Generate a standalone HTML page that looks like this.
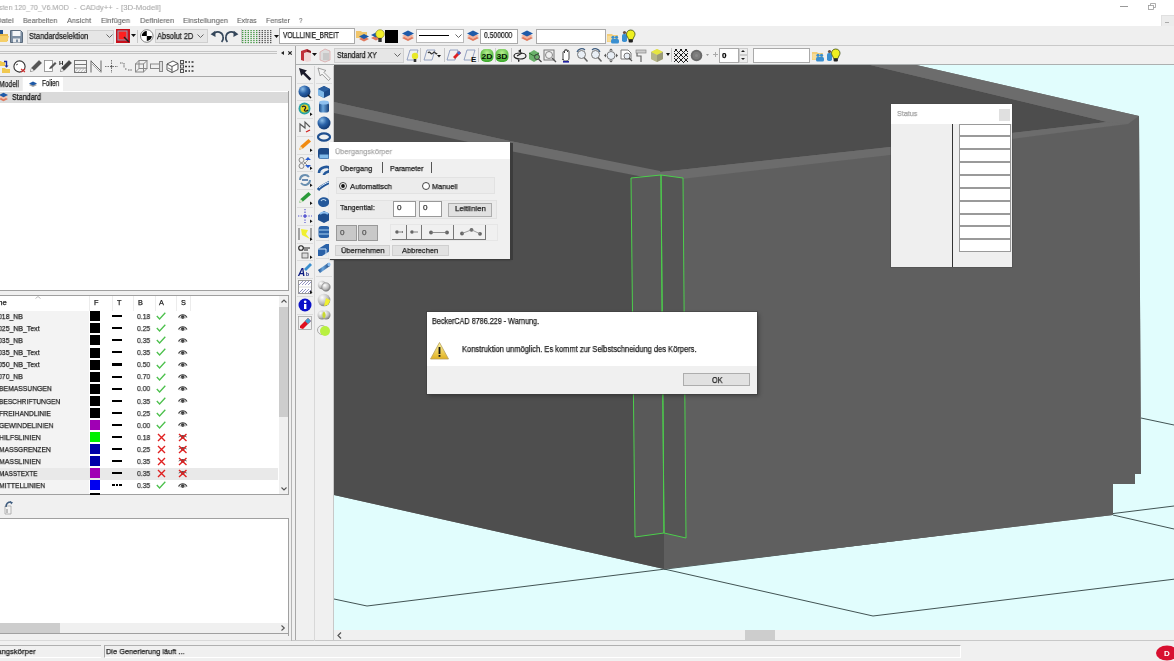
<!DOCTYPE html>
<html><head><meta charset="utf-8">
<style>
*{margin:0;padding:0;box-sizing:border-box}
html,body{width:1174px;height:661px;overflow:hidden;background:#f0f0f0;font-family:"Liberation Sans",sans-serif;font-size:8px;color:#000;position:relative}
.a{position:absolute}
svg.a{overflow:visible}
.t{position:absolute;white-space:nowrap;line-height:1;transform-origin:0 0;will-change:transform;-webkit-text-stroke:0.25px currentColor}
</style></head><body>
<div class="a" style="left:0px;top:0px;width:1174px;height:26px;background:#fff"></div>
<div class="t" id="t0" style="left:-1px;top:3.80px;font-size:7.8px;color:#aaa;font-weight:normal;-webkit-text-stroke:0.1px #aaa;transform:scaleX(0.9047);">sten 120_70_V6.MOD</div>
<div class="t" id="t1" style="left:73.5px;top:3.80px;font-size:7.8px;color:#aaa;font-weight:normal;-webkit-text-stroke:0.1px #aaa;">-</div>
<div class="t" id="t2" style="left:80.4px;top:3.80px;font-size:7.8px;color:#aaa;font-weight:normal;-webkit-text-stroke:0.1px #aaa;transform:scaleX(0.9641);">CADdy++</div>
<div class="t" id="t3" style="left:115.5px;top:3.80px;font-size:7.8px;color:#aaa;font-weight:normal;-webkit-text-stroke:0.1px #aaa;">-</div>
<div class="t" id="t4" style="left:121px;top:3.80px;font-size:7.8px;color:#aaa;font-weight:normal;-webkit-text-stroke:0.1px #aaa;transform:scaleX(0.9956);">[3D-Modell]</div>
<div class="a" style="left:1120px;top:6px;width:8px;height:0.8px;background:#999"></div>
<svg class="a" style="left:1148px;top:3px" width="8" height="7" viewBox="0 0 8 7"><rect x="0.5" y="2.5" width="5" height="4" fill="none" stroke="#999" stroke-width="0.8"/><path d="M2.5 2.5V0.5H7.5V4.5H5.5" fill="none" stroke="#999" stroke-width="0.8"/></svg>
<div class="t" id="t5" style="left:-4.5px;top:16.73px;font-size:8.0px;color:#666;font-weight:normal;-webkit-text-stroke:0.1px #666;transform:scaleX(0.9472);">Datei</div>
<div class="t" id="t6" style="left:22.9px;top:16.73px;font-size:8.0px;color:#666;font-weight:normal;-webkit-text-stroke:0.1px #666;transform:scaleX(0.8862);">Bearbeiten</div>
<div class="t" id="t7" style="left:67.3px;top:16.73px;font-size:8.0px;color:#666;font-weight:normal;-webkit-text-stroke:0.1px #666;transform:scaleX(0.9225);">Ansicht</div>
<div class="t" id="t8" style="left:101.4px;top:16.73px;font-size:8.0px;color:#666;font-weight:normal;-webkit-text-stroke:0.1px #666;transform:scaleX(0.9147);">Einfügen</div>
<div class="t" id="t9" style="left:139.7px;top:16.73px;font-size:8.0px;color:#666;font-weight:normal;-webkit-text-stroke:0.1px #666;transform:scaleX(0.9378);">Definieren</div>
<div class="t" id="t10" style="left:182.9px;top:16.73px;font-size:8.0px;color:#666;font-weight:normal;-webkit-text-stroke:0.1px #666;transform:scaleX(0.9387);">Einstellungen</div>
<div class="t" id="t11" style="left:236.9px;top:16.73px;font-size:8.0px;color:#666;font-weight:normal;-webkit-text-stroke:0.1px #666;transform:scaleX(0.8645);">Extras</div>
<div class="t" id="t12" style="left:265.8px;top:16.73px;font-size:8.0px;color:#666;font-weight:normal;-webkit-text-stroke:0.1px #666;transform:scaleX(0.8811);">Fenster</div>
<div class="t" id="t13" style="left:299px;top:16.73px;font-size:8.0px;color:#666;font-weight:normal;-webkit-text-stroke:0.1px #666;transform:scaleX(0.7860);">?</div>
<div class="a" style="left:1160.5px;top:15px;width:14px;height:11.5px;background:#ececec;border:1px solid #e0e0e0"></div>
<div class="a" style="left:1165px;top:22px;width:4px;height:1px;background:#aaa"></div>
<div class="a" style="left:0px;top:26px;width:1174px;height:19px;background:#efefef"></div>
<div class="a" style="left:0px;top:45px;width:1174px;height:1px;background:#c9c9c9"></div>
<svg class="a" style="left:-4px;top:29px" width="14" height="14" viewBox="0 0 14 14"><path d="M0 4h5l1 1h6v7H0z" fill="#e8b84a"/><path d="M1 7h12l-2 6H0z" fill="#f5cf6a"/><rect x="2" y="1" width="5" height="4" fill="#1f4f8f"/></svg>
<svg class="a" style="left:10px;top:30px" width="13" height="13" viewBox="0 0 13 13"><path d="M0.5 0.5h10l2 2v10h-12z" fill="#7d8fa3" stroke="#5b6b7d"/><rect x="2.5" y="1" width="8" height="5" fill="#f4f6f8"/><rect x="3" y="8.5" width="7" height="4" fill="#e9ecef"/><rect x="6" y="9.5" width="2" height="2.5" fill="#7d8fa3"/></svg>
<div class="a" style="left:27px;top:29.5px;width:87px;height:14px;background:#e6e6e6;border:1px solid #cfcfcf"></div>
<div class="t" id="t14" style="left:29.1px;top:31.77px;font-size:8.3px;color:#1a1a1a;font-weight:normal;transform:scaleX(0.8928);">Standardselektion</div>
<svg class="a" style="left:106px;top:34px" width="7" height="5" viewBox="0 0 7 5"><path d="M0.5 0.5L3.5 3.5L6.5 0.5" fill="none" stroke="#666"/></svg>
<svg class="a" style="left:116px;top:29px" width="14" height="14" viewBox="0 0 14 14"><rect width="14" height="14" fill="#c8101b"/><rect x="2" y="2" width="9" height="9" fill="#ff2020" stroke="#8aa0b8" stroke-width="1"/><path d="M8 8l5 5" stroke="#222" stroke-width="1.5"/></svg>
<svg class="a" style="left:131px;top:34px" width="5" height="3" viewBox="0 0 5 3"><path d="M0 0h5L2.5 3z" fill="#111"/></svg>
<div class="a" style="left:137px;top:30px;width:1px;height:13px;background:#c8c8c8"></div>
<svg class="a" style="left:140px;top:29px" width="14" height="14" viewBox="0 0 14 14"><circle cx="6.8" cy="7" r="6.3" fill="#fff" stroke="#777" stroke-width="0.9"/><path d="M6.8 2A5 5 0 0 0 1.8 7H6.8z M6.8 12A5 5 0 0 0 11.8 7H6.8z" fill="#000"/></svg>
<div class="a" style="left:154.5px;top:28.8px;width:53px;height:14.4px;background:#e6e6e6;border:1px solid #cfcfcf"></div>
<div class="t" id="t15" style="left:157px;top:31.77px;font-size:8.3px;color:#1a1a1a;font-weight:normal;transform:scaleX(0.8942);">Absolut 2D</div>
<svg class="a" style="left:197px;top:34px" width="7" height="5" viewBox="0 0 7 5"><path d="M0.5 0.5L3.5 3.5L6.5 0.5" fill="none" stroke="#666"/></svg>
<svg class="a" style="left:209.5px;top:29.5px" width="14" height="13" viewBox="0 0 14 13"><path d="M4.5 3.2C7 1 12 1.5 13 6.2C13.7 9 12.5 11 11.6 12" fill="none" stroke="#34465a" stroke-width="1.6"/><path d="M0.6 4.2L5.2 0.8L5.6 7z" fill="#34465a"/></svg>
<svg class="a" style="left:224.5px;top:29.5px" width="14" height="13" viewBox="0 0 14 13"><path d="M9.5 3.2C7 1 2 1.5 1 6.2C0.3 9 1.5 11 2.4 12" fill="none" stroke="#34465a" stroke-width="1.6"/><path d="M13.4 4.2L8.8 0.8L8.4 7z" fill="#34465a"/></svg>
<svg class="a" style="left:242px;top:29.5px" width="31" height="14" viewBox="0 0 31 14"><rect x="0.0" y="0" width="1.4" height="1.2" fill="#4a9a4a"/><rect x="2.8" y="0" width="1.4" height="1.2" fill="#4a9a4a"/><rect x="5.6" y="0" width="1.4" height="1.2" fill="#4a9a4a"/><rect x="8.4" y="0" width="1.4" height="1.2" fill="#4a9a4a"/><rect x="11.2" y="0" width="1.4" height="1.2" fill="#4a9a4a"/><rect x="14.0" y="0" width="1.4" height="1.2" fill="#4a9a4a"/><rect x="16.8" y="0" width="1.4" height="1.2" fill="#555"/><rect x="19.6" y="0" width="1.4" height="1.2" fill="#555"/><rect x="22.4" y="0" width="1.4" height="1.2" fill="#555"/><rect x="25.2" y="0" width="1.4" height="1.2" fill="#555"/><rect x="28.0" y="0" width="1.4" height="1.2" fill="#555"/><rect x="0.0" y="2" width="1.4" height="1.2" fill="#4a9a4a"/><rect x="2.8" y="2" width="1.4" height="1.2" fill="#4a9a4a"/><rect x="5.6" y="2" width="1.4" height="1.2" fill="#4a9a4a"/><rect x="8.4" y="2" width="1.4" height="1.2" fill="#4a9a4a"/><rect x="11.2" y="2" width="1.4" height="1.2" fill="#4a9a4a"/><rect x="14.0" y="2" width="1.4" height="1.2" fill="#4a9a4a"/><rect x="16.8" y="2" width="1.4" height="1.2" fill="#555"/><rect x="19.6" y="2" width="1.4" height="1.2" fill="#555"/><rect x="22.4" y="2" width="1.4" height="1.2" fill="#555"/><rect x="25.2" y="2" width="1.4" height="1.2" fill="#555"/><rect x="28.0" y="2" width="1.4" height="1.2" fill="#555"/><rect x="0.0" y="4" width="1.4" height="1.2" fill="#4a9a4a"/><rect x="2.8" y="4" width="1.4" height="1.2" fill="#4a9a4a"/><rect x="5.6" y="4" width="1.4" height="1.2" fill="#4a9a4a"/><rect x="8.4" y="4" width="1.4" height="1.2" fill="#4a9a4a"/><rect x="11.2" y="4" width="1.4" height="1.2" fill="#4a9a4a"/><rect x="14.0" y="4" width="1.4" height="1.2" fill="#4a9a4a"/><rect x="16.8" y="4" width="1.4" height="1.2" fill="#555"/><rect x="19.6" y="4" width="1.4" height="1.2" fill="#555"/><rect x="22.4" y="4" width="1.4" height="1.2" fill="#555"/><rect x="25.2" y="4" width="1.4" height="1.2" fill="#555"/><rect x="28.0" y="4" width="1.4" height="1.2" fill="#555"/><rect x="0.0" y="6" width="1.4" height="1.2" fill="#4a9a4a"/><rect x="2.8" y="6" width="1.4" height="1.2" fill="#4a9a4a"/><rect x="5.6" y="6" width="1.4" height="1.2" fill="#4a9a4a"/><rect x="8.4" y="6" width="1.4" height="1.2" fill="#4a9a4a"/><rect x="11.2" y="6" width="1.4" height="1.2" fill="#4a9a4a"/><rect x="14.0" y="6" width="1.4" height="1.2" fill="#4a9a4a"/><rect x="16.8" y="6" width="1.4" height="1.2" fill="#555"/><rect x="19.6" y="6" width="1.4" height="1.2" fill="#555"/><rect x="22.4" y="6" width="1.4" height="1.2" fill="#555"/><rect x="25.2" y="6" width="1.4" height="1.2" fill="#555"/><rect x="28.0" y="6" width="1.4" height="1.2" fill="#555"/><rect x="0.0" y="8" width="1.4" height="1.2" fill="#4a9a4a"/><rect x="2.8" y="8" width="1.4" height="1.2" fill="#4a9a4a"/><rect x="5.6" y="8" width="1.4" height="1.2" fill="#4a9a4a"/><rect x="8.4" y="8" width="1.4" height="1.2" fill="#4a9a4a"/><rect x="11.2" y="8" width="1.4" height="1.2" fill="#4a9a4a"/><rect x="14.0" y="8" width="1.4" height="1.2" fill="#4a9a4a"/><rect x="16.8" y="8" width="1.4" height="1.2" fill="#555"/><rect x="19.6" y="8" width="1.4" height="1.2" fill="#555"/><rect x="22.4" y="8" width="1.4" height="1.2" fill="#555"/><rect x="25.2" y="8" width="1.4" height="1.2" fill="#555"/><rect x="28.0" y="8" width="1.4" height="1.2" fill="#555"/><rect x="0.0" y="10" width="1.4" height="1.2" fill="#4a9a4a"/><rect x="2.8" y="10" width="1.4" height="1.2" fill="#4a9a4a"/><rect x="5.6" y="10" width="1.4" height="1.2" fill="#4a9a4a"/><rect x="8.4" y="10" width="1.4" height="1.2" fill="#4a9a4a"/><rect x="11.2" y="10" width="1.4" height="1.2" fill="#4a9a4a"/><rect x="14.0" y="10" width="1.4" height="1.2" fill="#4a9a4a"/><rect x="16.8" y="10" width="1.4" height="1.2" fill="#555"/><rect x="19.6" y="10" width="1.4" height="1.2" fill="#555"/><rect x="22.4" y="10" width="1.4" height="1.2" fill="#555"/><rect x="25.2" y="10" width="1.4" height="1.2" fill="#555"/><rect x="28.0" y="10" width="1.4" height="1.2" fill="#555"/><rect x="0.0" y="12" width="1.4" height="1.2" fill="#4a9a4a"/><rect x="2.8" y="12" width="1.4" height="1.2" fill="#4a9a4a"/><rect x="5.6" y="12" width="1.4" height="1.2" fill="#4a9a4a"/><rect x="8.4" y="12" width="1.4" height="1.2" fill="#4a9a4a"/><rect x="11.2" y="12" width="1.4" height="1.2" fill="#4a9a4a"/><rect x="14.0" y="12" width="1.4" height="1.2" fill="#4a9a4a"/><rect x="16.8" y="12" width="1.4" height="1.2" fill="#555"/><rect x="19.6" y="12" width="1.4" height="1.2" fill="#555"/><rect x="22.4" y="12" width="1.4" height="1.2" fill="#555"/><rect x="25.2" y="12" width="1.4" height="1.2" fill="#555"/><rect x="28.0" y="12" width="1.4" height="1.2" fill="#555"/></svg>
<div class="a" style="left:240.5px;top:29px;width:1px;height:14px;background:#c8c8c8"></div>
<svg class="a" style="left:273.5px;top:35px" width="5" height="3" viewBox="0 0 5 3"><path d="M0 0h5L2.5 3z" fill="#111"/></svg>
<div class="a" style="left:279px;top:28px;width:76px;height:16px;background:#fff;border:1px solid #aaa"></div>
<div class="t" id="t16" style="left:283.1px;top:30.57px;font-size:8.3px;color:#1a1a1a;font-weight:normal;transform:scaleX(0.7872);">VOLLLINIE_BREIT</div>
<svg class="a" style="left:355.5px;top:29px" width="14" height="14" viewBox="0 0 14 14"><path d="M0 2h5l1 1h5v6H0z" fill="#f1c56a"/><path d="M3 10l5 2.5 5-2.5-5-2.5z" fill="#e07a5f"/><path d="M3 7.5l5 2.5 5-2.5-5-2.5z" fill="#1e5aa8"/></svg>
<svg class="a" style="left:370.5px;top:29px" width="14" height="14" viewBox="0 0 14 14"><path d="M0 9l5 2.5 5-2.5-5-2.5z" fill="#e07a5f"/><path d="M0 6l5 2.5 5-2.5-5-2.5z" fill="#1e5aa8"/><circle cx="9" cy="5" r="4.3" fill="#f2f02a" stroke="#7a7a20" stroke-width="0.6"/><rect x="7.3" y="9" width="3.4" height="4" fill="#333"/></svg>
<div class="a" style="left:385px;top:29.5px;width:13px;height:13px;background:#000"></div>
<svg class="a" style="left:401px;top:29px" width="14" height="14" viewBox="0 0 14 14"><path d="M1 9l6 3 6-3-6-3z" fill="#e07a5f"/><path d="M1 7l6 3 6-3-6-3z" fill="#f3b39d"/><path d="M1 4.5l6 3 6-3-6-3z" fill="#1e5aa8"/></svg>
<div class="a" style="left:415.5px;top:29px;width:48.5px;height:14px;background:#fff;border:1px solid #bbb"></div>
<div class="a" style="left:419px;top:35px;width:30px;height:1.4px;background:#000"></div>
<svg class="a" style="left:455px;top:34px" width="7" height="5" viewBox="0 0 7 5"><path d="M0.5 0.5L3.5 3.5L6.5 0.5" fill="none" stroke="#666"/></svg>
<svg class="a" style="left:466px;top:29px" width="14" height="14" viewBox="0 0 14 14"><path d="M1 9l6 3 6-3-6-3z" fill="#e07a5f"/><path d="M1 7l6 3 6-3-6-3z" fill="#f3b39d"/><path d="M1 4.5l6 3 6-3-6-3z" fill="#1e5aa8"/></svg>
<div class="a" style="left:479.5px;top:28.5px;width:38px;height:15.5px;background:#fff;border:1px solid #aaa"></div>
<div class="t" id="t17" style="left:483.5px;top:30.77px;font-size:8.3px;color:#1a1a1a;font-weight:normal;transform:scaleX(0.8148);">0.500000</div>
<svg class="a" style="left:519.5px;top:29px" width="14" height="14" viewBox="0 0 14 14"><path d="M1 9l6 3 6-3-6-3z" fill="#e07a5f"/><path d="M1 7l6 3 6-3-6-3z" fill="#f3b39d"/><path d="M1 4.5l6 3 6-3-6-3z" fill="#1e5aa8"/></svg>
<div class="a" style="left:536px;top:28.5px;width:69.5px;height:15.5px;background:#fff;border:1px solid #aaa"></div>
<svg class="a" style="left:606.5px;top:29.5px" width="14" height="14" viewBox="0 0 14 14"><path d="M0 4h5l1 1h5v7H0z" fill="#f3cd78"/><path d="M0.5 6h10v5.5h-10z" fill="#f7dc98"/><circle cx="6" cy="7.3" r="1.6" fill="#3a8fd0"/><circle cx="9.5" cy="7.3" r="1.6" fill="#3a8fd0"/><rect x="4" y="9" width="8" height="4.5" rx="1.5" fill="#3a8fd0"/></svg>
<svg class="a" style="left:621px;top:29px" width="15" height="14" viewBox="0 0 15 14"><circle cx="3.5" cy="3.5" r="1.6" fill="#6a5040"/><rect x="1" y="5" width="5" height="8" rx="1.8" fill="#3a8fd0"/><path d="M9.7 1C12.5 1 14 3.2 14 5.2C14 7.2 12.2 8.5 12 10.5H7.5C7.3 8.5 5.5 7.2 5.5 5.2C5.5 3.2 7 1 9.7 1z" fill="#eef020" stroke="#3a4a10" stroke-width="0.8"/><rect x="7.6" y="10.5" width="4.3" height="3" rx="1" fill="#222"/></svg>
<div class="a" style="left:296px;top:45.5px;width:878px;height:19px;background:#f0f0f0"></div>
<div class="a" style="left:295px;top:45.5px;width:1px;height:595px;background:#a8a8a8"></div>
<svg class="a" style="left:300px;top:47.5px" width="12" height="14" viewBox="0 0 12 14"><path d="M2 3l5-2 4 2v10l-4 1-5-2z" fill="#f0d8d8"/><path d="M1 3l6-2v3l-3 1v8l-3-1z" fill="#c0303a"/><path d="M7 1l4 2v2l-4-1z" fill="#8a1a20"/></svg>
<svg class="a" style="left:312px;top:52.5px" width="5" height="3" viewBox="0 0 5 3"><path d="M0 0h5L2.5 3z" fill="#111"/></svg>
<svg class="a" style="left:319px;top:47.5px" width="12" height="14" viewBox="0 0 12 14"><path d="M1 4l5-3 5 2v9l-5 2-5-2z" fill="#ddd" stroke="#d9a0a0" stroke-width="0.7"/><path d="M4 5h6v7H4z" fill="#c8c8c8"/></svg>
<div class="a" style="left:334px;top:48px;width:69.5px;height:14.5px;background:#e6e6e6;border:1px solid #cfcfcf"></div>
<div class="t" id="t18" style="left:336.9px;top:50.87px;font-size:8.3px;color:#1a1a1a;font-weight:normal;transform:scaleX(0.8481);">Standard XY</div>
<svg class="a" style="left:394px;top:52.5px" width="7" height="5" viewBox="0 0 7 5"><path d="M0.5 0.5L3.5 3.5L6.5 0.5" fill="none" stroke="#666"/></svg>
<svg class="a" style="left:406px;top:47.5px" width="13" height="15" viewBox="0 0 13 15"><path d="M1 12L4 2H12L9 12z" fill="none" stroke="#7d8fb8" stroke-width="0.8"/><circle cx="9" cy="8" r="3.2" fill="#e8e82a"/><rect x="7.7" y="11" width="2.6" height="3" fill="#333"/></svg>
<div class="a" style="left:420.4px;top:48px;width:1px;height:14px;background:#c8c8c8"></div>
<svg class="a" style="left:422.5px;top:47.5px" width="19" height="15" viewBox="0 0 19 15"><path d="M1 12L4 2H12L9 12z" fill="none" stroke="#7d8fb8" stroke-width="0.8"/><path d="M5 5c2-3 3 3 5 0s3 3 4 0" fill="none" stroke="#333" stroke-width="1.2"/><path d="M14 7h4l-2 2.5z" fill="#111"/></svg>
<div class="a" style="left:444px;top:48px;width:1px;height:14px;background:#c8c8c8"></div>
<svg class="a" style="left:446px;top:47.5px" width="15" height="15" viewBox="0 0 15 15"><path d="M1 12L4 2H12L9 12z" fill="none" stroke="#7d8fb8" stroke-width="0.8"/><path d="M7 9l6-6 2 2-6 6z" fill="#e02020"/><path d="M11 5l2-2 2 2-2 2z" fill="#3a6fd0"/></svg>
<svg class="a" style="left:462.7px;top:47.5px" width="14" height="15" viewBox="0 0 14 15"><path d="M1 12L4 2H12L9 12z" fill="none" stroke="#7d8fb8" stroke-width="0.8"/><text x="8" y="14" font-size="8" font-weight="bold" font-family="Liberation Sans" fill="#111">E</text></svg>
<div class="a" style="left:478px;top:48px;width:1px;height:14px;background:#c8c8c8"></div>
<div class="a" style="left:494.6px;top:48px;width:1px;height:14px;background:#d0d0d0"></div>
<svg class="a" style="left:480.4px;top:47.5px" width="14" height="15" viewBox="0 0 14 15"><defs><radialGradient id="gg2D" cx="0.5" cy="0.3" r="0.7"><stop offset="0" stop-color="#b8f090"/><stop offset="1" stop-color="#3aa82a"/></radialGradient></defs><rect x="0.5" y="1" width="13" height="13" rx="5" fill="url(#gg2D)"/><text x="7" y="11" text-anchor="middle" font-size="7.6" font-weight="bold" font-family="Liberation Sans" fill="#031503" textLength="11" lengthAdjust="spacingAndGlyphs">2D</text></svg>
<svg class="a" style="left:495.4px;top:47.5px" width="14" height="15" viewBox="0 0 14 15"><defs><radialGradient id="gg3D" cx="0.5" cy="0.3" r="0.7"><stop offset="0" stop-color="#b8f090"/><stop offset="1" stop-color="#3aa82a"/></radialGradient></defs><rect x="0.5" y="1" width="13" height="13" rx="5" fill="url(#gg3D)"/><text x="7" y="11" text-anchor="middle" font-size="7.6" font-weight="bold" font-family="Liberation Sans" fill="#031503" textLength="11" lengthAdjust="spacingAndGlyphs">3D</text></svg>
<div class="a" style="left:511px;top:48px;width:1px;height:14px;background:#c8c8c8"></div>
<svg class="a" style="left:513px;top:47.5px" width="14" height="15" viewBox="0 0 14 15"><ellipse cx="7" cy="8" rx="6" ry="3" fill="none" stroke="#222" stroke-width="1.2"/><path d="M5 3l3-2v4z M7 13l-2 1v-3z" fill="#222"/><path d="M4 8l5-3" stroke="#222" stroke-width="1.2"/></svg>
<svg class="a" style="left:528px;top:47.5px" width="14" height="15" viewBox="0 0 14 15"><path d="M1 5l5-3 5 3v6l-5 3-5-3z" fill="#6bb06b"/><path d="M1 5l5 3 5-3" fill="none" stroke="#2f6f2f"/><circle cx="9" cy="9" r="2.5" fill="none" stroke="#444"/><path d="M10.5 11l3 3" stroke="#444" stroke-width="1.2"/></svg>
<svg class="a" style="left:543px;top:47.5px" width="14" height="15" viewBox="0 0 14 15"><rect x="1" y="2" width="10" height="10" fill="none" stroke="#777"/><circle cx="6" cy="7" r="3.5" fill="none" stroke="#888"/><path d="M9 10l4 4" stroke="#555" stroke-width="1.2"/></svg>
<svg class="a" style="left:560px;top:47.5px" width="12" height="15" viewBox="0 0 12 15"><path d="M3 12V5c0-2 1-2 1.5 0V3c0-2 1.5-2 1.5 0v0c0-2 1.5-2 1.5 0v1c0-2 1.5-2 1.5 0v6c0 2-1 3-3 3H5c-1 0-2-1-2-2z" fill="#fff" stroke="#333" stroke-width="0.9"/><rect x="3" y="13" width="6" height="1.6" fill="#2020a0"/></svg>
<svg class="a" style="left:576px;top:47.5px" width="12" height="15" viewBox="0 0 12 15"><circle cx="5.5" cy="6.5" r="4" fill="#e8eef5" stroke="#777" stroke-width="1"/><path d="M8 9.5l3.5 4" stroke="#666" stroke-width="1.5"/><path d="M1 4A5 5 0 0 1 9 2" fill="none" stroke="#3d5b7e" stroke-width="1.2"/></svg>
<svg class="a" style="left:590px;top:47.5px" width="12" height="15" viewBox="0 0 12 15"><circle cx="5.5" cy="6.5" r="4" fill="#e8eef5" stroke="#777" stroke-width="1"/><path d="M8 9.5l3.5 4" stroke="#666" stroke-width="1.5"/><path d="M10 4A5 5 0 0 0 2 2" fill="none" stroke="#3d5b7e" stroke-width="1.2"/></svg>
<svg class="a" style="left:604px;top:47.5px" width="14" height="15" viewBox="0 0 14 15"><circle cx="7" cy="7.5" r="4" fill="#e8eef5" stroke="#777"/><path d="M7 0.5l2 2H5z M7 14.5l2-2H5z M0 7.5l2-2v4z M14 7.5l-2-2v4z" fill="#555"/></svg>
<svg class="a" style="left:619.5px;top:47.5px" width="14" height="15" viewBox="0 0 14 15"><path d="M1 2h7l3 3v6H1z" fill="#fff" stroke="#777"/><circle cx="7" cy="8" r="3" fill="#e8eef5" stroke="#777"/><path d="M9 10l3 3" stroke="#555" stroke-width="1.3"/></svg>
<svg class="a" style="left:635px;top:47.5px" width="12" height="15" viewBox="0 0 12 15"><rect x="1" y="2" width="10" height="3" fill="#ccc" stroke="#888" stroke-width="0.7"/><path d="M2 5v3h4v6" fill="none" stroke="#666" stroke-width="1.2"/></svg>
<svg class="a" style="left:650px;top:47.5px" width="15" height="15" viewBox="0 0 15 15"><path d="M1 4l6-3 6 3v7l-6 3-6-3z" fill="#c7c78a"/><path d="M1 4l6 3 6-3-6-3z" fill="#e6e640"/><path d="M7 7v7l6-3V4z" fill="#9a9a7a"/><path d="M1 4v7l6 3V7z" fill="#b5b58a"/></svg>
<svg class="a" style="left:666px;top:52.5px" width="4" height="3" viewBox="0 0 4 3"><path d="M0 0h4L2 3z" fill="#111"/></svg>
<div class="a" style="left:671px;top:48px;width:1px;height:14px;background:#c8c8c8"></div>
<svg class="a" style="left:674px;top:48.5px" width="14" height="14" viewBox="0 0 14 14"><clipPath id="ck"><rect width="14" height="14"/></clipPath><g clip-path="url(#ck)"><path d="M-14.0 0l14 14M28.0 0l-14 14" stroke="#222" stroke-width="1"/><path d="M-9.0 0l14 14M23.0 0l-14 14" stroke="#222" stroke-width="1"/><path d="M-4.0 0l14 14M18.0 0l-14 14" stroke="#222" stroke-width="1"/><path d="M1.0 0l14 14M13.0 0l-14 14" stroke="#222" stroke-width="1"/><path d="M6.0 0l14 14M8.0 0l-14 14" stroke="#222" stroke-width="1"/><path d="M11.0 0l14 14M3.0 0l-14 14" stroke="#222" stroke-width="1"/><path d="M16.0 0l14 14M-2.0 0l-14 14" stroke="#222" stroke-width="1"/></g></svg>
<svg class="a" style="left:690px;top:48.5px" width="13" height="13" viewBox="0 0 13 13"><circle cx="6.5" cy="6.5" r="5.8" fill="#6a6a6a"/><circle cx="6.5" cy="6.5" r="3.8" fill="#7c7c7c"/><circle cx="6.5" cy="6.5" r="1.5" fill="#8a8a8a"/></svg>
<svg class="a" style="left:705.5px;top:54px" width="3" height="2" viewBox="0 0 3 2"><path d="M0 0h3L1.5 2z" fill="#999"/></svg>
<svg class="a" style="left:713px;top:52px" width="5" height="5" viewBox="0 0 5 5"><path d="M2.5 0v5M0 2.5h5" stroke="#aaa"/></svg>
<div class="a" style="left:719px;top:48px;width:20px;height:14.5px;background:#fff;border:1px solid #aaa"></div>
<div class="t" id="t19" style="left:721.5px;top:51.53px;font-size:8.0px;color:#000;font-weight:bold;">0</div>
<div class="a" style="left:739px;top:48px;width:8.5px;height:7px;background:#eee;border:1px solid #ccc"></div>
<div class="a" style="left:739px;top:55px;width:8.5px;height:7.5px;background:#eee;border:1px solid #ccc"></div>
<svg class="a" style="left:741px;top:50px" width="4" height="2" viewBox="0 0 4 2"><path d="M0 2h4L2 0z" fill="#222"/></svg>
<svg class="a" style="left:741px;top:58px" width="4" height="2" viewBox="0 0 4 2"><path d="M0 0h4L2 2z" fill="#222"/></svg>
<div class="a" style="left:753px;top:47.5px;width:57px;height:15px;background:#fff;border:1px solid #aaa"></div>
<svg class="a" style="left:811.7px;top:48px" width="14" height="14" viewBox="0 0 14 14"><path d="M0 4h5l1 1h5v7H0z" fill="#f3cd78"/><path d="M0.5 6h10v5.5h-10z" fill="#f7dc98"/><circle cx="6" cy="7.3" r="1.6" fill="#3a8fd0"/><circle cx="9.5" cy="7.3" r="1.6" fill="#3a8fd0"/><rect x="4" y="9" width="8" height="4.5" rx="1.5" fill="#3a8fd0"/></svg>
<svg class="a" style="left:826px;top:47.5px" width="15" height="14" viewBox="0 0 15 14"><circle cx="3.5" cy="3.5" r="1.6" fill="#6a5040"/><rect x="1" y="5" width="5" height="8" rx="1.8" fill="#3a8fd0"/><path d="M9.7 1C12.5 1 14 3.2 14 5.2C14 7.2 12.2 8.5 12 10.5H7.5C7.3 8.5 5.5 7.2 5.5 5.2C5.5 3.2 7 1 9.7 1z" fill="#eef020" stroke="#3a4a10" stroke-width="0.8"/><rect x="7.6" y="10.5" width="4.3" height="3" rx="1" fill="#222"/></svg>
<svg class="a" style="left:334px;top:65px" width="840" height="566" viewBox="334 65 840 566"><rect x="334" y="64" width="840" height="568" fill="#e1fdfd"/>
<g fill="none" stroke="#2f3f3f" stroke-width="0.9">
<polyline points="334,599 367,606 1174,506"/>
<polyline points="664,569 873,616 1174,579.2"/>
<line x1="1113" y1="515" x2="1174" y2="529"/>
<line x1="1141" y1="418" x2="1174" y2="425"/>
</g>
<polygon points="334,64 912,64 1139,116 1141,474 1135,474 1135,484 1113,484 1113,515 664,569 334,495" fill="#6c6c6c"/>
<polygon points="334,64 866,64 1107,122 890,147 660,172 510,141 334,102" fill="#4d4d4d"/>
<polygon points="334,102 510,141 660,171 664,181 510,151 334,113" fill="#6c6c6c"/>
<polygon points="660,172 890,147 1107,122 1128,124 1050,134 890,155 664,181" fill="#6c6c6c"/>
<polygon points="866,64 912,64 1139,116 1128,124 1107,122" fill="#6c6c6c"/>
<polygon points="334,113 510,151 664,181 664,569 334,495" fill="#4e4e4e"/>
<polygon points="664,181 890,155 1050,134 1128,124 1139,116 1141,474 1135,474 1135,484 1113,484 1113,515 664,569" fill="#5f5f5f"/>
<polygon points="631,178 661,175 664,533 635,537" fill="#595959"/>
<polygon points="661,175 683,178 686,538 664,533" fill="#555555"/>

<g fill="none" stroke="#4ccf4c" stroke-width="1">
<polygon points="631,178 661,175 664,533 635,537"/>
<polygon points="661,175 683,178 686,538 664,533"/>
</g></svg>
<div class="a" style="left:296px;top:63.9px;width:878px;height:1.5px;background:#acb0b0"></div>
<div class="a" style="left:334px;top:629.5px;width:840px;height:11px;background:#f0f0f0"></div>
<div class="a" style="left:745px;top:630px;width:30px;height:9.5px;background:#cdcdcd"></div>
<svg class="a" style="left:337px;top:631.5px" width="5" height="7" viewBox="0 0 5 7"><path d="M4 0.5L1 3.5L4 6.5" fill="none" stroke="#555" stroke-width="1.2"/></svg>
<div class="a" style="left:292px;top:640px;width:882px;height:1px;background:#c8c8c8"></div>
<div class="a" style="left:0px;top:640px;width:292px;height:1px;background:#dadada"></div>
<div class="a" style="left:0px;top:51px;width:276.5px;height:1px;background:#c4c4c4"></div>
<div class="a" style="left:0px;top:53px;width:276.5px;height:1px;background:#c4c4c4"></div>
<svg class="a" style="left:281px;top:50.5px" width="3" height="4" viewBox="0 0 3 4"><path d="M3 0v4L0 2z" fill="#222"/></svg>
<svg class="a" style="left:287.5px;top:50.5px" width="4" height="4" viewBox="0 0 4 4"><path d="M0.3 0.3l3.4 3.4M3.7 0.3l-3.4 3.4" stroke="#222" stroke-width="1.2"/></svg>
<svg class="a" style="left:-2px;top:58.5px" width="13" height="15" viewBox="0 0 13 15"><path d="M0 2h3l1 1h3v4H0z" fill="#f0c850"/><path d="M4 9h3l1 1h4v4H4z" fill="#f0c850"/><path d="M6 2.5h2.5v4.5" fill="none" stroke="#1a2a9a" stroke-width="1.4"/><path d="M6.5 6.5h4l-2 2.2z" fill="#1a2a9a"/></svg>
<svg class="a" style="left:13.4px;top:59.5px" width="13" height="13" viewBox="0 0 13 13"><circle cx="6.5" cy="6.5" r="5.6" fill="#fff" stroke="#333" stroke-width="1.1"/><path d="M3 5l2-1" stroke="#555"/><path d="M8 9l4 3M12 9l-4 3" stroke="#d03030" stroke-width="1.1"/></svg>
<svg class="a" style="left:28.7px;top:59px" width="13" height="14" viewBox="0 0 13 14"><path d="M1.5 12.5l1-3.5 7.5-7.5 2.5 2.5-7.5 7.5z" fill="#555" stroke="#333" stroke-width="0.5"/><path d="M1.5 12.5l1-3.5 2.5 2.5z" fill="#eee"/></svg>
<svg class="a" style="left:44px;top:59px" width="13" height="14" viewBox="0 0 13 14"><rect x="0.5" y="1.5" width="8" height="11" fill="#fff" stroke="#888" stroke-width="0.8"/><path d="M5 10l1-2 5-5 1.5 1.5-5 5z" fill="#555"/></svg>
<svg class="a" style="left:58.7px;top:59px" width="13" height="14" viewBox="0 0 13 14"><path d="M1.5 12.5l1-3.5 7.5-7.5 2.5 2.5-7.5 7.5z" fill="#444" stroke="#333" stroke-width="0.5"/><path d="M1.5 12.5l1-3.5 2.5 2.5z" fill="#eee"/><text x="0" y="6" font-size="6" font-weight="bold" font-family="Liberation Sans" fill="#111">H</text></svg>
<svg class="a" style="left:73.7px;top:59.5px" width="13" height="13" viewBox="0 0 13 13"><rect x="0.5" y="0.5" width="12" height="12" fill="#f4f4f4" stroke="#777"/><path d="M0.5 4.5h12M0.5 8h12" stroke="#777"/><path d="M1 12l3-3.5M4 12l3-3.5M7 12l3-3.5M10 12l2.5-3" stroke="#999" stroke-width="0.6"/></svg>
<svg class="a" style="left:89.8px;top:59.5px" width="12" height="13" viewBox="0 0 12 13"><path d="M1 0.5v12M11 0.5v12M1 1l10 10" stroke="#666" stroke-width="1"/><path d="M2 4l8 8" stroke="#aaa"/></svg>
<svg class="a" style="left:104.7px;top:59.5px" width="13" height="13" viewBox="0 0 13 13"><path d="M6.5 0v13M0 6.5h13" stroke="#777" stroke-dasharray="1.5 1"/><circle cx="6.5" cy="6.5" r="1" fill="#555"/></svg>
<svg class="a" style="left:120px;top:59.5px" width="13" height="13" viewBox="0 0 13 13"><path d="M0 3h3M4 3v5M5 9h2M8 10h4" stroke="#666" stroke-width="1" stroke-dasharray="1.5 0.8"/></svg>
<svg class="a" style="left:135px;top:59.5px" width="13" height="13" viewBox="0 0 13 13"><rect x="0.5" y="4" width="8" height="8" fill="none" stroke="#888"/><rect x="4" y="0.5" width="8" height="8" fill="none" stroke="#888"/><path d="M0.5 4l3.5-3.5M8.5 4l3.5-3.5M0.5 12l3.5-3.5M8.5 12l3.5-3.5" stroke="#888"/></svg>
<svg class="a" style="left:150px;top:59.5px" width="13" height="13" viewBox="0 0 13 13"><rect x="0.5" y="4" width="9" height="4.5" fill="#eee" stroke="#888"/><rect x="9.5" y="1.5" width="3" height="10" fill="#ddd" stroke="#888"/></svg>
<svg class="a" style="left:165.5px;top:59.5px" width="13" height="13" viewBox="0 0 13 13"><path d="M1 4l6-3 5 2.5v6l-6 3-5-2.5z" fill="#fff" stroke="#444" stroke-width="0.9"/><path d="M1 4l5 2.5 6-3M6 6.5v6" fill="none" stroke="#444" stroke-width="0.9"/><path d="M2 8l4 2" stroke="#444" stroke-width="0.7"/></svg>
<svg class="a" style="left:180.4px;top:59.5px" width="14" height="13" viewBox="0 0 14 13"><rect x="0.5" y="0.5" width="3" height="3" fill="none" stroke="#555"/><rect x="0.5" y="5" width="3" height="3" fill="none" stroke="#555"/><rect x="0.5" y="9.5" width="3" height="3" fill="none" stroke="#555"/><path d="M5 2h2M8.5 2h1.5M11.5 2h2M5 6.5h2M8.5 6.5h1.5M11.5 6.5h2M5 11h2M8.5 11h1.5M11.5 11h2" stroke="#333" stroke-width="1.3"/></svg>
<div class="a" style="left:0px;top:75.5px;width:291px;height:1px;background:#a9a9a9"></div>
<div class="a" style="left:291px;top:75.5px;width:1px;height:565px;background:#b4b4b4"></div>
<div class="a" style="left:0px;top:77px;width:22px;height:14px;background:#ebebeb"></div>
<div class="a" style="left:23px;top:77px;width:40px;height:14px;background:#fff"></div>
<div class="t" id="t20" style="left:-0.8px;top:80.47px;font-size:8.3px;color:#222;font-weight:normal;transform:scaleX(0.8179);">Modell</div>
<svg class="a" style="left:29px;top:79.5px" width="9" height="8" viewBox="0 0 9 8"><path d="M0 5l4 2 4-2-4-2z" fill="#a0a0a0"/><path d="M0 3.5l4 2 4-2-4-2z" fill="#1e5aa8"/></svg>
<div class="t" id="t21" style="left:41.7px;top:79.17px;font-size:8.3px;color:#222;font-weight:normal;transform:scaleX(0.7563);">Folien</div>
<div class="a" style="left:0px;top:91px;width:289px;height:200px;background:#fff;border-right:1px solid #a0a0a0;border-bottom:1px solid #a0a0a0"></div>
<div class="a" style="left:0px;top:91.7px;width:288px;height:11.3px;background:#dadada"></div>
<svg class="a" style="left:-1px;top:92px" width="9" height="10" viewBox="0 0 9 10"><path d="M0 7l4.5 2.3L9 7 4.5 4.7z" fill="#e07a5f"/><path d="M0 5l4.5 2.3L9 5 4.5 2.7z" fill="#f3c3ad"/><path d="M0 3l4.5 2.3L9 3 4.5 0.7z" fill="#1e5aa8"/></svg>
<div class="t" id="t22" style="left:11.9px;top:93.17px;font-size:8.3px;color:#111;font-weight:normal;transform:scaleX(0.8609);">Standard</div>
<div class="a" style="left:0px;top:295px;width:289px;height:200px;background:#fff;border-top:1px solid #a0a0a0;border-right:1px solid #a0a0a0;border-bottom:1px solid #a0a0a0"></div>
<div class="a" style="left:0px;top:310.5px;width:89px;height:183.5px;background:#f3f3f3"></div>
<div class="a" style="left:89.4px;top:296px;width:1px;height:14.5px;background:#ececec"></div>
<div class="a" style="left:111.6px;top:296px;width:1px;height:14.5px;background:#ececec"></div>
<div class="a" style="left:132.9px;top:296px;width:1px;height:14.5px;background:#ececec"></div>
<div class="a" style="left:155px;top:296px;width:1px;height:14.5px;background:#ececec"></div>
<div class="a" style="left:176.3px;top:296px;width:1px;height:14.5px;background:#ececec"></div>
<div class="a" style="left:190px;top:296px;width:1px;height:14.5px;background:#ececec"></div>
<svg class="a" style="left:35px;top:296px" width="6" height="3" viewBox="0 0 6 3"><path d="M0.5 2.5L3 0.5L5.5 2.5" fill="none" stroke="#bbb"/></svg>
<div class="t" id="t23" style="left:-13.8px;top:299.20px;font-size:7.8px;color:#222;font-weight:normal;">Name</div>
<div class="t" id="t24" style="left:94.2px;top:299.32px;font-size:7.3px;color:#222;font-weight:normal;">F</div>
<div class="t" id="t25" style="left:116.6px;top:299.32px;font-size:7.3px;color:#222;font-weight:normal;">T</div>
<div class="t" id="t26" style="left:137.5px;top:299.32px;font-size:7.3px;color:#222;font-weight:normal;">B</div>
<div class="t" id="t27" style="left:159.2px;top:299.32px;font-size:7.3px;color:#222;font-weight:normal;">A</div>
<div class="t" id="t28" style="left:181px;top:299.32px;font-size:7.3px;color:#222;font-weight:normal;">S</div>
<div class="t" id="t29" style="left:-2.2px;top:313.00px;font-size:7.8px;color:#222;font-weight:normal;transform:scaleX(0.8798);">018_NB</div>
<div class="a" style="left:90.3px;top:311.3px;width:10.2px;height:10px;background:#000"></div>
<div class="a" style="left:112px;top:315.1px;width:9.8px;height:2.1px;background:#000"></div>
<div class="t" id="t30" style="left:137px;top:313.00px;font-size:7.8px;color:#333;font-weight:normal;transform:scaleX(0.8757);">0.18</div>
<svg class="a" style="left:156px;top:312.2px" width="10" height="8" viewBox="0 0 10 8"><path d="M0.8 4l2.8 3L9.3 0.8" fill="none" stroke="#4cc04c" stroke-width="1.3"/></svg>
<svg class="a" style="left:178px;top:312.5px" width="9.5" height="7" viewBox="0 0 9.5 7"><path d="M0.5 4.5C2.5 0.8 7 0.8 9 4.5" fill="none" stroke="#3a3a3a" stroke-width="1.1"/><circle cx="4.75" cy="4.1" r="1.8" fill="#3a3a3a"/><path d="M1.5 4.8h6.5" stroke="#777" stroke-width="0.6"/></svg>
<div class="t" id="t31" style="left:-2.2px;top:325.08px;font-size:7.8px;color:#222;font-weight:normal;transform:scaleX(0.8865);">025_NB_Text</div>
<div class="a" style="left:90.3px;top:323.38px;width:10.2px;height:10px;background:#000"></div>
<div class="a" style="left:112px;top:327.18px;width:9.8px;height:2.1px;background:#000"></div>
<div class="t" id="t32" style="left:137px;top:325.08px;font-size:7.8px;color:#333;font-weight:normal;transform:scaleX(0.8757);">0.25</div>
<svg class="a" style="left:156px;top:324.28px" width="10" height="8" viewBox="0 0 10 8"><path d="M0.8 4l2.8 3L9.3 0.8" fill="none" stroke="#4cc04c" stroke-width="1.3"/></svg>
<svg class="a" style="left:178px;top:324.58px" width="9.5" height="7" viewBox="0 0 9.5 7"><path d="M0.5 4.5C2.5 0.8 7 0.8 9 4.5" fill="none" stroke="#3a3a3a" stroke-width="1.1"/><circle cx="4.75" cy="4.1" r="1.8" fill="#3a3a3a"/><path d="M1.5 4.8h6.5" stroke="#777" stroke-width="0.6"/></svg>
<div class="t" id="t33" style="left:-2.2px;top:337.16px;font-size:7.8px;color:#222;font-weight:normal;transform:scaleX(0.8798);">035_NB</div>
<div class="a" style="left:90.3px;top:335.46000000000004px;width:10.2px;height:10px;background:#000"></div>
<div class="a" style="left:112px;top:339.26000000000005px;width:9.8px;height:2.1px;background:#000"></div>
<div class="t" id="t34" style="left:137px;top:337.16px;font-size:7.8px;color:#333;font-weight:normal;transform:scaleX(0.8757);">0.35</div>
<svg class="a" style="left:156px;top:336.36px" width="10" height="8" viewBox="0 0 10 8"><path d="M0.8 4l2.8 3L9.3 0.8" fill="none" stroke="#4cc04c" stroke-width="1.3"/></svg>
<svg class="a" style="left:178px;top:336.66px" width="9.5" height="7" viewBox="0 0 9.5 7"><path d="M0.5 4.5C2.5 0.8 7 0.8 9 4.5" fill="none" stroke="#3a3a3a" stroke-width="1.1"/><circle cx="4.75" cy="4.1" r="1.8" fill="#3a3a3a"/><path d="M1.5 4.8h6.5" stroke="#777" stroke-width="0.6"/></svg>
<div class="t" id="t35" style="left:-2.2px;top:349.24px;font-size:7.8px;color:#222;font-weight:normal;transform:scaleX(0.8865);">035_NB_Text</div>
<div class="a" style="left:90.3px;top:347.54px;width:10.2px;height:10px;background:#000"></div>
<div class="a" style="left:112px;top:351.34000000000003px;width:9.8px;height:2.1px;background:#000"></div>
<div class="t" id="t36" style="left:137px;top:349.24px;font-size:7.8px;color:#333;font-weight:normal;transform:scaleX(0.8757);">0.35</div>
<svg class="a" style="left:156px;top:348.44px" width="10" height="8" viewBox="0 0 10 8"><path d="M0.8 4l2.8 3L9.3 0.8" fill="none" stroke="#4cc04c" stroke-width="1.3"/></svg>
<svg class="a" style="left:178px;top:348.74px" width="9.5" height="7" viewBox="0 0 9.5 7"><path d="M0.5 4.5C2.5 0.8 7 0.8 9 4.5" fill="none" stroke="#3a3a3a" stroke-width="1.1"/><circle cx="4.75" cy="4.1" r="1.8" fill="#3a3a3a"/><path d="M1.5 4.8h6.5" stroke="#777" stroke-width="0.6"/></svg>
<div class="t" id="t37" style="left:-2.2px;top:361.32px;font-size:7.8px;color:#222;font-weight:normal;transform:scaleX(0.8865);">050_NB_Text</div>
<div class="a" style="left:90.3px;top:359.62px;width:10.2px;height:10px;background:#000"></div>
<div class="a" style="left:112px;top:363.42px;width:9.8px;height:2.1px;background:#000"></div>
<div class="t" id="t38" style="left:137px;top:361.32px;font-size:7.8px;color:#333;font-weight:normal;transform:scaleX(0.8757);">0.50</div>
<svg class="a" style="left:156px;top:360.52px" width="10" height="8" viewBox="0 0 10 8"><path d="M0.8 4l2.8 3L9.3 0.8" fill="none" stroke="#4cc04c" stroke-width="1.3"/></svg>
<svg class="a" style="left:178px;top:360.82px" width="9.5" height="7" viewBox="0 0 9.5 7"><path d="M0.5 4.5C2.5 0.8 7 0.8 9 4.5" fill="none" stroke="#3a3a3a" stroke-width="1.1"/><circle cx="4.75" cy="4.1" r="1.8" fill="#3a3a3a"/><path d="M1.5 4.8h6.5" stroke="#777" stroke-width="0.6"/></svg>
<div class="t" id="t39" style="left:-2.2px;top:373.40px;font-size:7.8px;color:#222;font-weight:normal;transform:scaleX(0.8798);">070_NB</div>
<div class="a" style="left:90.3px;top:371.7px;width:10.2px;height:10px;background:#000"></div>
<div class="a" style="left:112px;top:375.5px;width:9.8px;height:2.1px;background:#000"></div>
<div class="t" id="t40" style="left:137px;top:373.40px;font-size:7.8px;color:#333;font-weight:normal;transform:scaleX(0.8757);">0.70</div>
<svg class="a" style="left:156px;top:372.59999999999997px" width="10" height="8" viewBox="0 0 10 8"><path d="M0.8 4l2.8 3L9.3 0.8" fill="none" stroke="#4cc04c" stroke-width="1.3"/></svg>
<svg class="a" style="left:178px;top:372.9px" width="9.5" height="7" viewBox="0 0 9.5 7"><path d="M0.5 4.5C2.5 0.8 7 0.8 9 4.5" fill="none" stroke="#3a3a3a" stroke-width="1.1"/><circle cx="4.75" cy="4.1" r="1.8" fill="#3a3a3a"/><path d="M1.5 4.8h6.5" stroke="#777" stroke-width="0.6"/></svg>
<div class="t" id="t41" style="left:-1.2px;top:385.48px;font-size:7.8px;color:#222;font-weight:normal;transform:scaleX(0.8705);">BEMASSUNGEN</div>
<div class="a" style="left:90.3px;top:383.78000000000003px;width:10.2px;height:10px;background:#000"></div>
<div class="a" style="left:112px;top:387.58000000000004px;width:9.8px;height:2.1px;background:#000"></div>
<div class="t" id="t42" style="left:137px;top:385.48px;font-size:7.8px;color:#333;font-weight:normal;transform:scaleX(0.8757);">0.00</div>
<svg class="a" style="left:156px;top:384.68px" width="10" height="8" viewBox="0 0 10 8"><path d="M0.8 4l2.8 3L9.3 0.8" fill="none" stroke="#4cc04c" stroke-width="1.3"/></svg>
<svg class="a" style="left:178px;top:384.98px" width="9.5" height="7" viewBox="0 0 9.5 7"><path d="M0.5 4.5C2.5 0.8 7 0.8 9 4.5" fill="none" stroke="#3a3a3a" stroke-width="1.1"/><circle cx="4.75" cy="4.1" r="1.8" fill="#3a3a3a"/><path d="M1.5 4.8h6.5" stroke="#777" stroke-width="0.6"/></svg>
<div class="t" id="t43" style="left:-1.2px;top:397.56px;font-size:7.8px;color:#222;font-weight:normal;transform:scaleX(0.8460);">BESCHRIFTUNGEN</div>
<div class="a" style="left:90.3px;top:395.86px;width:10.2px;height:10px;background:#000"></div>
<div class="a" style="left:112px;top:399.66px;width:9.8px;height:2.1px;background:#000"></div>
<div class="t" id="t44" style="left:137px;top:397.56px;font-size:7.8px;color:#333;font-weight:normal;transform:scaleX(0.8757);">0.35</div>
<svg class="a" style="left:156px;top:396.76px" width="10" height="8" viewBox="0 0 10 8"><path d="M0.8 4l2.8 3L9.3 0.8" fill="none" stroke="#4cc04c" stroke-width="1.3"/></svg>
<svg class="a" style="left:178px;top:397.06px" width="9.5" height="7" viewBox="0 0 9.5 7"><path d="M0.5 4.5C2.5 0.8 7 0.8 9 4.5" fill="none" stroke="#3a3a3a" stroke-width="1.1"/><circle cx="4.75" cy="4.1" r="1.8" fill="#3a3a3a"/><path d="M1.5 4.8h6.5" stroke="#777" stroke-width="0.6"/></svg>
<div class="t" id="t45" style="left:-1.2px;top:409.64px;font-size:7.8px;color:#222;font-weight:normal;transform:scaleX(0.8727);">FREIHANDLINIE</div>
<div class="a" style="left:90.3px;top:407.94px;width:10.2px;height:10px;background:#000"></div>
<div class="a" style="left:112px;top:411.74px;width:9.8px;height:2.1px;background:#000"></div>
<div class="t" id="t46" style="left:137px;top:409.64px;font-size:7.8px;color:#333;font-weight:normal;transform:scaleX(0.8757);">0.25</div>
<svg class="a" style="left:156px;top:408.84px" width="10" height="8" viewBox="0 0 10 8"><path d="M0.8 4l2.8 3L9.3 0.8" fill="none" stroke="#4cc04c" stroke-width="1.3"/></svg>
<svg class="a" style="left:178px;top:409.14px" width="9.5" height="7" viewBox="0 0 9.5 7"><path d="M0.5 4.5C2.5 0.8 7 0.8 9 4.5" fill="none" stroke="#3a3a3a" stroke-width="1.1"/><circle cx="4.75" cy="4.1" r="1.8" fill="#3a3a3a"/><path d="M1.5 4.8h6.5" stroke="#777" stroke-width="0.6"/></svg>
<div class="t" id="t47" style="left:-1.2px;top:421.72px;font-size:7.8px;color:#222;font-weight:normal;transform:scaleX(0.8735);">GEWINDELINIEN</div>
<div class="a" style="left:90.3px;top:420.02000000000004px;width:10.2px;height:10px;background:#a000b4"></div>
<div class="a" style="left:112px;top:423.82000000000005px;width:9.8px;height:2.1px;background:#000"></div>
<div class="t" id="t48" style="left:137px;top:421.72px;font-size:7.8px;color:#333;font-weight:normal;transform:scaleX(0.8757);">0.00</div>
<svg class="a" style="left:156px;top:420.92px" width="10" height="8" viewBox="0 0 10 8"><path d="M0.8 4l2.8 3L9.3 0.8" fill="none" stroke="#4cc04c" stroke-width="1.3"/></svg>
<svg class="a" style="left:178px;top:421.22px" width="9.5" height="7" viewBox="0 0 9.5 7"><path d="M0.5 4.5C2.5 0.8 7 0.8 9 4.5" fill="none" stroke="#3a3a3a" stroke-width="1.1"/><circle cx="4.75" cy="4.1" r="1.8" fill="#3a3a3a"/><path d="M1.5 4.8h6.5" stroke="#777" stroke-width="0.6"/></svg>
<div class="t" id="t49" style="left:-1.2px;top:433.80px;font-size:7.8px;color:#222;font-weight:normal;transform:scaleX(0.8849);">HILFSLINIEN</div>
<div class="a" style="left:90.3px;top:432.1px;width:10.2px;height:10px;background:#00f000"></div>
<div class="a" style="left:112px;top:435.90000000000003px;width:9.8px;height:2.1px;background:#000"></div>
<div class="t" id="t50" style="left:137px;top:433.80px;font-size:7.8px;color:#333;font-weight:normal;transform:scaleX(0.8757);">0.18</div>
<svg class="a" style="left:156.5px;top:433.0px" width="9" height="9" viewBox="0 0 9 9"><path d="M1 1l7 7M8 1L1 8" stroke="#e02020" stroke-width="1.4"/></svg>
<svg class="a" style="left:178px;top:433.0px" width="9.5" height="9" viewBox="0 0 9.5 9"><path d="M0.3 4.5C2 1 7.5 1 9.2 4.5C7.5 3 2 3 0.3 4.5z" fill="#555"/><circle cx="4.75" cy="4.2" r="1.6" fill="#555"/><path d="M1 1l7.5 7M8.5 1L1 8" stroke="#e02020" stroke-width="1.4"/></svg>
<div class="t" id="t51" style="left:-1.2px;top:445.88px;font-size:7.8px;color:#222;font-weight:normal;transform:scaleX(0.8602);">MASSGRENZEN</div>
<div class="a" style="left:90.3px;top:444.18px;width:10.2px;height:10px;background:#0000a8"></div>
<div class="a" style="left:112px;top:447.98px;width:9.8px;height:2.1px;background:#000"></div>
<div class="t" id="t52" style="left:137px;top:445.88px;font-size:7.8px;color:#333;font-weight:normal;transform:scaleX(0.8757);">0.25</div>
<svg class="a" style="left:156.5px;top:445.08px" width="9" height="9" viewBox="0 0 9 9"><path d="M1 1l7 7M8 1L1 8" stroke="#e02020" stroke-width="1.4"/></svg>
<svg class="a" style="left:178px;top:445.08px" width="9.5" height="9" viewBox="0 0 9.5 9"><path d="M0.3 4.5C2 1 7.5 1 9.2 4.5C7.5 3 2 3 0.3 4.5z" fill="#555"/><circle cx="4.75" cy="4.2" r="1.6" fill="#555"/><path d="M1 1l7.5 7M8.5 1L1 8" stroke="#e02020" stroke-width="1.4"/></svg>
<div class="t" id="t53" style="left:-1.2px;top:457.96px;font-size:7.8px;color:#222;font-weight:normal;transform:scaleX(0.8849);">MASSLINIEN</div>
<div class="a" style="left:90.3px;top:456.26000000000005px;width:10.2px;height:10px;background:#0000a8"></div>
<div class="a" style="left:112px;top:460.06000000000006px;width:9.8px;height:2.1px;background:#000"></div>
<div class="t" id="t54" style="left:137px;top:457.96px;font-size:7.8px;color:#333;font-weight:normal;transform:scaleX(0.8757);">0.35</div>
<svg class="a" style="left:156.5px;top:457.16px" width="9" height="9" viewBox="0 0 9 9"><path d="M1 1l7 7M8 1L1 8" stroke="#e02020" stroke-width="1.4"/></svg>
<svg class="a" style="left:178px;top:457.16px" width="9.5" height="9" viewBox="0 0 9.5 9"><path d="M0.3 4.5C2 1 7.5 1 9.2 4.5C7.5 3 2 3 0.3 4.5z" fill="#555"/><circle cx="4.75" cy="4.2" r="1.6" fill="#555"/><path d="M1 1l7.5 7M8.5 1L1 8" stroke="#e02020" stroke-width="1.4"/></svg>
<div class="a" style="left:0px;top:468.03999999999996px;width:278px;height:12px;background:#e9e9e9"></div>
<div class="t" id="t55" style="left:-1.2px;top:470.04px;font-size:7.8px;color:#222;font-weight:normal;transform:scaleX(0.8151);">MASSTEXTE</div>
<div class="a" style="left:90.3px;top:468.34px;width:10.2px;height:10px;background:#a000b4"></div>
<div class="a" style="left:112px;top:472.14px;width:9.8px;height:2.1px;background:#000"></div>
<div class="t" id="t56" style="left:137px;top:470.04px;font-size:7.8px;color:#333;font-weight:normal;transform:scaleX(0.8757);">0.35</div>
<svg class="a" style="left:156.5px;top:469.23999999999995px" width="9" height="9" viewBox="0 0 9 9"><path d="M1 1l7 7M8 1L1 8" stroke="#e02020" stroke-width="1.4"/></svg>
<svg class="a" style="left:178px;top:469.23999999999995px" width="9.5" height="9" viewBox="0 0 9.5 9"><path d="M0.3 4.5C2 1 7.5 1 9.2 4.5C7.5 3 2 3 0.3 4.5z" fill="#555"/><circle cx="4.75" cy="4.2" r="1.6" fill="#555"/><path d="M1 1l7.5 7M8.5 1L1 8" stroke="#e02020" stroke-width="1.4"/></svg>
<div class="t" id="t57" style="left:-1.2px;top:482.12px;font-size:7.8px;color:#222;font-weight:normal;transform:scaleX(0.8740);">MITTELLINIEN</div>
<div class="a" style="left:90.3px;top:480.42px;width:10.2px;height:10px;background:#0000f0"></div>
<div class="a" style="left:112.0px;top:484.22px;width:2.5px;height:2px;background:#000"></div>
<div class="a" style="left:115.5px;top:484.22px;width:2.5px;height:2px;background:#000"></div>
<div class="a" style="left:119.0px;top:484.22px;width:2.5px;height:2px;background:#000"></div>
<div class="t" id="t58" style="left:137px;top:482.12px;font-size:7.8px;color:#333;font-weight:normal;transform:scaleX(0.8757);">0.35</div>
<svg class="a" style="left:156px;top:481.32px" width="10" height="8" viewBox="0 0 10 8"><path d="M0.8 4l2.8 3L9.3 0.8" fill="none" stroke="#4cc04c" stroke-width="1.3"/></svg>
<svg class="a" style="left:178px;top:481.62px" width="9.5" height="7" viewBox="0 0 9.5 7"><path d="M0.5 4.5C2.5 0.8 7 0.8 9 4.5" fill="none" stroke="#3a3a3a" stroke-width="1.1"/><circle cx="4.75" cy="4.1" r="1.8" fill="#3a3a3a"/><path d="M1.5 4.8h6.5" stroke="#777" stroke-width="0.6"/></svg>
<div class="a" style="left:90.3px;top:492.5px;width:10.2px;height:2px;background:#000"></div>
<div class="a" style="left:278.5px;top:296px;width:9.5px;height:198px;background:#f0f0f0"></div>
<div class="a" style="left:278.5px;top:306.5px;width:9.5px;height:110px;background:#cdcdcd"></div>
<svg class="a" style="left:280.5px;top:299px" width="6" height="4" viewBox="0 0 6 4"><path d="M0.5 3.5L3 1L5.5 3.5" fill="none" stroke="#555" stroke-width="1.1"/></svg>
<svg class="a" style="left:280.5px;top:486.5px" width="6" height="4" viewBox="0 0 6 4"><path d="M0.5 0.5L3 3L5.5 0.5" fill="none" stroke="#555" stroke-width="1.1"/></svg>
<svg class="a" style="left:3px;top:500.5px" width="11" height="14" viewBox="0 0 11 14"><path d="M2 5h6v8H2z" fill="#f4f4f4" stroke="#999" stroke-width="0.7"/><path d="M3 6c0-3 2-5 5-5" fill="none" stroke="#3d5b7e" stroke-width="1.5"/><path d="M7 0l3 1.5-2 2z" fill="#3d5b7e"/><path d="M4 8v4" stroke="#888"/></svg>
<div class="a" style="left:0px;top:518px;width:289px;height:1px;background:#a0a0a0"></div>
<div class="a" style="left:0px;top:519px;width:289px;height:117px;background:#fff;border-right:1px solid #a0a0a0;border-bottom:1px solid #a0a0a0"></div>
<div class="a" style="left:0px;top:622.5px;width:288px;height:10px;background:#f0f0f0"></div>
<div class="a" style="left:0px;top:622.5px;width:60px;height:10px;background:#cdcdcd"></div>
<div class="a" style="left:0px;top:632.5px;width:289px;height:1px;background:#a0a0a0"></div>
<div class="a" style="left:0px;top:633.5px;width:288px;height:2px;background:#f0f0f0"></div>
<svg class="a" style="left:280.5px;top:624.5px" width="4" height="6" viewBox="0 0 4 6"><path d="M0.5 0.5L3.3 3L0.5 5.5" fill="none" stroke="#555" stroke-width="1.1"/></svg>
<div class="a" style="left:314px;top:65.5px;width:1px;height:575px;background:#d8d8d8"></div>
<div class="a" style="left:333.3px;top:65.5px;width:1px;height:575px;background:#c8c8c8"></div>
<svg class="a" style="left:0;top:0" width="0" height="0"><defs><radialGradient id="gb" cx="0.35" cy="0.3" r="0.8"><stop offset="0" stop-color="#8cbde8"/><stop offset="0.45" stop-color="#2a62a8"/><stop offset="1" stop-color="#0c2f66"/></radialGradient><radialGradient id="gw" cx="0.35" cy="0.3" r="0.8"><stop offset="0" stop-color="#fff"/><stop offset="0.6" stop-color="#bbb"/><stop offset="1" stop-color="#666"/></radialGradient><linearGradient id="gc" x1="0" x2="1"><stop offset="0" stop-color="#1a4a88"/><stop offset="0.4" stop-color="#6aa5dc"/><stop offset="1" stop-color="#173f78"/></linearGradient></defs></svg>
<div class="a" style="left:297px;top:82.58px;width:16px;height:1px;background:#dcdcdc"></div>
<div class="a" style="left:297px;top:100.36px;width:16px;height:1px;background:#dcdcdc"></div>
<div class="a" style="left:297px;top:118.14px;width:16px;height:1px;background:#dcdcdc"></div>
<div class="a" style="left:297px;top:135.92000000000002px;width:16px;height:1px;background:#dcdcdc"></div>
<div class="a" style="left:297px;top:153.7px;width:16px;height:1px;background:#dcdcdc"></div>
<div class="a" style="left:297px;top:171.48000000000002px;width:16px;height:1px;background:#dcdcdc"></div>
<div class="a" style="left:297px;top:189.26px;width:16px;height:1px;background:#dcdcdc"></div>
<div class="a" style="left:297px;top:207.04000000000002px;width:16px;height:1px;background:#dcdcdc"></div>
<div class="a" style="left:297px;top:224.82px;width:16px;height:1px;background:#dcdcdc"></div>
<div class="a" style="left:297px;top:242.60000000000002px;width:16px;height:1px;background:#dcdcdc"></div>
<div class="a" style="left:297px;top:260.38px;width:16px;height:1px;background:#dcdcdc"></div>
<div class="a" style="left:297px;top:278.16px;width:16px;height:1px;background:#dcdcdc"></div>
<div class="a" style="left:297px;top:295.94px;width:16px;height:1px;background:#dcdcdc"></div>
<div class="a" style="left:297px;top:313.72px;width:16px;height:1px;background:#dcdcdc"></div>
<svg class="a" style="left:298px;top:66.8px" width="14" height="14" viewBox="0 0 14 14"><path d="M1 1l8 2.5-2.2 1.8 6.5 6.5-1.8 1.8-6.5-6.5L3.2 9z" fill="#1a1a2a"/></svg>
<svg class="a" style="left:298px;top:84.58px" width="14" height="14" viewBox="0 0 14 14"><circle cx="6.5" cy="6.5" r="6" fill="url(#gb)"/><path d="M10 10l3 3" stroke="#111" stroke-width="1.6"/></svg>
<svg class="a" style="left:298px;top:102.36px" width="14" height="14" viewBox="0 0 14 14"><circle cx="6.5" cy="6.5" r="6" fill="#2aa3a3"/><circle cx="6.5" cy="6.5" r="4" fill="#e8d820"/><path d="M4 5c2-2 5 0 3 2s1 3 3 1" fill="none" stroke="#222" stroke-width="1.3"/><path d="M12 10.5l2.5 1.8L12 14z" fill="#111"/></svg>
<svg class="a" style="left:298px;top:120.14px" width="14" height="14" viewBox="0 0 14 14"><path d="M2 12V4l5 4V2l5 5" fill="none" stroke="#555" stroke-width="1.1"/><path d="M8 12l4-2" stroke="#d02020" stroke-width="1.3"/></svg>
<svg class="a" style="left:298px;top:137.92000000000002px" width="14" height="14" viewBox="0 0 14 14"><path d="M1 12l1.5-4 8-7 2.5 2.5-8 7z" fill="#f08a10"/><path d="M1 12l1.5-4 2.5 2.5z" fill="#f5d7a0"/><path d="M12 10.5l2.5 1.8L12 14z" fill="#111"/></svg>
<svg class="a" style="left:298px;top:155.7px" width="14" height="14" viewBox="0 0 14 14"><circle cx="3.5" cy="4" r="2.5" fill="none" stroke="#888"/><circle cx="3.5" cy="10" r="2.5" fill="none" stroke="#888"/><path d="M5 5l5 5M5 9l5-5" stroke="#999"/><path d="M10 1l3 3h-6zM10 12l3-3h-6z" fill="#2a5ed0"/><path d="M12 10.5l2.5 1.8L12 14z" fill="#111"/></svg>
<svg class="a" style="left:298px;top:173.48000000000002px" width="14" height="14" viewBox="0 0 14 14"><path d="M2 7a5 5 0 0 1 9-3" fill="none" stroke="#6a8fb0" stroke-width="2"/><path d="M12 7a5 5 0 0 1-9 3" fill="none" stroke="#6a8fb0" stroke-width="2"/><path d="M4 7h6" stroke="#3d6a9e" stroke-width="1.5"/><path d="M12 10.5l2.5 1.8L12 14z" fill="#111"/></svg>
<svg class="a" style="left:298px;top:191.26px" width="14" height="14" viewBox="0 0 14 14"><path d="M1 12l1.5-4 8-7 2.5 2.5-8 7z" fill="#2a9a3a"/><path d="M1 12l1.5-4 2.5 2.5z" fill="#e0e8d0"/><path d="M12 10.5l2.5 1.8L12 14z" fill="#111"/></svg>
<svg class="a" style="left:298px;top:209.04000000000002px" width="14" height="14" viewBox="0 0 14 14"><path d="M7 0v14M0 7h14" stroke="#5a5ad0" stroke-width="1.2" stroke-dasharray="1.3 1.3"/><circle cx="7" cy="7" r="1.6" fill="#5a5ad0"/><path d="M12 10.5l2.5 1.8L12 14z" fill="#111"/></svg>
<svg class="a" style="left:298px;top:226.82px" width="14" height="14" viewBox="0 0 14 14"><path d="M1 1v12M13 1v12" stroke="#666" stroke-width="1.1"/><path d="M3 2l7 1-2 4 4 5-8-4z" fill="#f0f030"/><path d="M12 10.5l2.5 1.8L12 14z" fill="#111"/></svg>
<svg class="a" style="left:298px;top:244.60000000000002px" width="14" height="14" viewBox="0 0 14 14"><circle cx="3" cy="3" r="2.3" fill="none" stroke="#222" stroke-width="1.1"/><path d="M5 3h7M6 5h4" stroke="#222" stroke-width="1.1"/><rect x="4" y="8" width="6" height="5" fill="#ddd" stroke="#555" stroke-width="0.8"/><path d="M12 10.5l2.5 1.8L12 14z" fill="#111"/></svg>
<svg class="a" style="left:298px;top:262.38px" width="14" height="14" viewBox="0 0 14 14"><path d="M6 7l6-6 2 2-6 6z" fill="#3a8fd0"/><text x="0" y="13.5" font-size="10" font-weight="bold" font-style="italic" font-family="Liberation Sans" fill="#0a1a80">A</text><text x="8" y="13.5" font-size="5" font-weight="bold" font-family="Liberation Sans" fill="#0a1a80">b</text></svg>
<svg class="a" style="left:298px;top:280.16px" width="14" height="14" viewBox="0 0 14 14"><rect x="0.5" y="0.5" width="13" height="13" fill="#fff" stroke="#999"/><path d="M1 5l4-4M4 5l4-4M7 5l4-4M10 5l3-3M1 13l4-4M4 13l4-4M7 13l4-4M10 13l3-3" stroke="#8888bb" stroke-width="0.9"/><rect x="1" y="6" width="12" height="2" fill="#eee"/><path d="M12 10.5l2.5 1.8L12 14z" fill="#111"/></svg>
<svg class="a" style="left:298px;top:297.94px" width="14" height="14" viewBox="0 0 14 14"><circle cx="7" cy="7" r="6.5" fill="#0a10c8"/><rect x="6" y="6" width="2.4" height="5" fill="#fff"/><circle cx="7.2" cy="3.8" r="1.3" fill="#fff"/></svg>
<svg class="a" style="left:298px;top:315.72px" width="14" height="14" viewBox="0 0 14 14"><rect x="0.5" y="0.5" width="13" height="13" fill="none" stroke="#999" stroke-width="0.7"/><path d="M2 12l3 1 8-8-3-3-8 8z" fill="#e01020"/><path d="M7 5l3-3 3 3-3 3z" fill="#40a0d0"/></svg>
<div class="a" style="left:316px;top:82.6px;width:16px;height:1px;background:#dcdcdc"></div>
<div class="a" style="left:316px;top:240px;width:16px;height:1px;background:#dcdcdc"></div>
<div class="a" style="left:316px;top:258.3px;width:16px;height:1px;background:#dcdcdc"></div>
<div class="a" style="left:316px;top:276.4px;width:16px;height:1px;background:#dcdcdc"></div>
<svg class="a" style="left:317px;top:66.8px" width="14" height="14" viewBox="0 0 14 14"><path d="M1 1l8 2.5-2.2 1.8 6.5 6.5-1.8 1.8-6.5-6.5L3.2 9z" fill="#f4f4f4" stroke="#8a8a8a" stroke-width="0.8"/></svg>
<svg class="a" style="left:317px;top:84.6px" width="14" height="14" viewBox="0 0 14 14"><path d="M1 4l6-3 6 3v6l-6 3-6-3z" fill="#1d4a88"/><path d="M1 4l6 3 6-3-6-3z" fill="#2a5e9e"/><path d="M1 4v6l6 3V7z" fill="#7fb8e8"/></svg>
<svg class="a" style="left:317px;top:99.7px" width="14" height="14" viewBox="0 0 14 14"><rect x="2" y="2.5" width="10" height="10" rx="2" fill="url(#gc)"/><ellipse cx="7" cy="2.5" rx="5" ry="2" fill="#8ec0f0"/></svg>
<svg class="a" style="left:317px;top:115.5px" width="14" height="14" viewBox="0 0 14 14"><circle cx="7" cy="7" r="6.5" fill="url(#gb)"/></svg>
<svg class="a" style="left:317px;top:130px" width="14" height="14" viewBox="0 0 14 14"><ellipse cx="7" cy="7" rx="6" ry="3.6" fill="none" stroke="#1f4f8f" stroke-width="2.2"/></svg>
<svg class="a" style="left:317px;top:145.5px" width="14" height="14" viewBox="0 0 14 14"><rect x="1" y="2" width="12" height="11" rx="3" fill="#1d4a88"/><rect x="2.5" y="8.5" width="9" height="4" fill="#7fb8e8"/></svg>
<svg class="a" style="left:317px;top:163px" width="14" height="14" viewBox="0 0 14 14"><path d="M2 10c0-6 10-8 11-4s-6 2-6 6" fill="none" stroke="#24589a" stroke-width="2.6"/><path d="M4 8l3 2" stroke="#cfe4f8" stroke-width="1.2"/></svg>
<svg class="a" style="left:317px;top:179px" width="14" height="14" viewBox="0 0 14 14"><path d="M1 11c3-4 8-6 12-8" fill="none" stroke="#24589a" stroke-width="3"/><path d="M2 9c3-3 7-5 10-6" fill="none" stroke="#d8e8f8" stroke-width="1"/></svg>
<svg class="a" style="left:317px;top:194.5px" width="14" height="14" viewBox="0 0 14 14"><path d="M1 7c0-4 6-6 9-4s3 6 0 8-9 1-9-4z" fill="#24589a"/><path d="M4 6c1-2 4-2 5 0" fill="none" stroke="#bcd8f0" stroke-width="1.2"/></svg>
<svg class="a" style="left:317px;top:209.5px" width="14" height="14" viewBox="0 0 14 14"><path d="M1 5l6-4 6 3v6l-6 3-6-3z" fill="#1f4f8f"/><path d="M3 4c2-2 6-2 8 0" fill="none" stroke="#8ec0f0" stroke-width="2"/></svg>
<svg class="a" style="left:317px;top:225px" width="14" height="14" viewBox="0 0 14 14"><rect x="1.5" y="1" width="11" height="12" rx="3" fill="#2a62a8"/><path d="M2 5h10M2 9h10" stroke="#a8d0f0" stroke-width="1.2"/></svg>
<svg class="a" style="left:317px;top:242.7px" width="14" height="14" viewBox="0 0 14 14"><path d="M1 6l8-5h4v7l-8 5H1z" fill="#2a62a8"/><path d="M1 6h8V13" fill="none" stroke="#cfe4f8" stroke-width="1"/></svg>
<svg class="a" style="left:317px;top:260.4px" width="14" height="14" viewBox="0 0 14 14"><path d="M1 10l10-7 2 3-10 7z" fill="url(#gc)"/><ellipse cx="12" cy="4.5" rx="1.5" ry="2" fill="#8ec0f0"/></svg>
<svg class="a" style="left:317px;top:278.6px" width="14" height="14" viewBox="0 0 14 14"><circle cx="5" cy="6" r="4.2" fill="url(#gw)"/><circle cx="9" cy="8" r="4.2" fill="url(#gw)" stroke="#777" stroke-width="0.6"/></svg>
<svg class="a" style="left:317px;top:293.4px" width="14" height="14" viewBox="0 0 14 14"><circle cx="7" cy="7" r="6.3" fill="url(#gw)"/><path d="M7 13a6 6 0 0 0 6-6L9 5z" fill="#f0f030"/></svg>
<svg class="a" style="left:317px;top:308.3px" width="14" height="14" viewBox="0 0 14 14"><circle cx="5" cy="7" r="4.5" fill="url(#gw)"/><circle cx="9" cy="7" r="4.5" fill="url(#gw)"/><path d="M7 3.5a4.5 4.5 0 0 1 0 7a4.5 4.5 0 0 1 0-7z" fill="#c8d830"/></svg>
<svg class="a" style="left:317px;top:323px" width="14" height="14" viewBox="0 0 14 14"><circle cx="5" cy="7" r="4.5" fill="none" stroke="#aaa"/><circle cx="8" cy="8" r="5" fill="#b8f040"/></svg>
<div class="a" style="left:328.6px;top:141.7px;width:181px;height:117px;background:#f0f0f0;box-shadow:1px 1px 2px rgba(0,0,0,0.35)"></div>
<div class="a" style="left:328.6px;top:141.7px;width:181px;height:17.5px;background:#fff"></div>
<div class="t" id="t59" style="left:334.7px;top:148.04px;font-size:8.1px;color:#aaa;font-weight:normal;transform:scaleX(0.9113);">Übergangskörper</div>
<div class="a" style="left:335px;top:160px;width:174px;height:14px;background:#f0f0f0"></div>
<div class="t" id="t60" style="left:339.8px;top:165.34px;font-size:8.1px;color:#1a1a1a;font-weight:normal;transform:scaleX(0.9083);">Übergang</div>
<div class="a" style="left:381.5px;top:162px;width:1px;height:11px;background:#555"></div>
<div class="t" id="t61" style="left:390px;top:165.44px;font-size:8.1px;color:#1a1a1a;font-weight:normal;transform:scaleX(0.8863);">Parameter</div>
<div class="a" style="left:431.4px;top:162px;width:1px;height:11px;background:#555"></div>
<div class="a" style="left:336px;top:177.4px;width:158.5px;height:17px;background:#ececec;border:1px solid #e2e2e2"></div>
<svg class="a" style="left:339.4px;top:182px" width="8" height="8" viewBox="0 0 8 8"><circle cx="4" cy="4" r="3.5" fill="#fff" stroke="#333" stroke-width="0.9"/><circle cx="4" cy="4" r="1.9" fill="#111"/></svg>
<div class="t" id="t62" style="left:349.7px;top:182.64px;font-size:8.1px;color:#1a1a1a;font-weight:normal;transform:scaleX(0.9428);">Automatisch</div>
<svg class="a" style="left:422px;top:182px" width="8" height="8" viewBox="0 0 8 8"><circle cx="4" cy="4" r="3.5" fill="#fff" stroke="#333" stroke-width="0.9"/></svg>
<div class="t" id="t63" style="left:432px;top:182.64px;font-size:8.1px;color:#1a1a1a;font-weight:normal;transform:scaleX(0.9062);">Manuell</div>
<div class="a" style="left:336px;top:199.8px;width:161px;height:19px;background:#ececec;border:1px solid #e2e2e2"></div>
<div class="t" id="t64" style="left:340.3px;top:203.74px;font-size:8.1px;color:#1a1a1a;font-weight:normal;transform:scaleX(0.8862);">Tangential:</div>
<div class="a" style="left:393px;top:201px;width:22.5px;height:16px;background:#fff;border:1px solid #999"></div>
<div class="t" id="t65" style="left:396.5px;top:203.74px;font-size:8.1px;color:#333;font-weight:normal;">0</div>
<div class="a" style="left:419.3px;top:201px;width:22.3px;height:16px;background:#fff;border:1px solid #999"></div>
<div class="t" id="t66" style="left:423px;top:203.74px;font-size:8.1px;color:#333;font-weight:normal;">0</div>
<div class="a" style="left:448px;top:203px;width:44.2px;height:13.7px;background:#e1e1e1;border:1px solid #adadad"></div>
<div class="t" id="t67" style="left:454.5px;top:205.44px;font-size:8.1px;color:#1a1a1a;font-weight:normal;transform:scaleX(0.9639);">Leitlinien</div>
<div class="a" style="left:336px;top:224.9px;width:20.7px;height:15.8px;background:#c8c8c8;border:1px solid #999"></div>
<div class="t" id="t68" style="left:340px;top:228.54px;font-size:8.1px;color:#555;font-weight:normal;">0</div>
<div class="a" style="left:358.3px;top:224.9px;width:20.2px;height:15.8px;background:#c8c8c8;border:1px solid #999"></div>
<div class="t" id="t69" style="left:362px;top:228.54px;font-size:8.1px;color:#555;font-weight:normal;">0</div>
<div class="a" style="left:390px;top:224px;width:108px;height:17px;border:1px solid #e6e6e6"></div>
<div class="a" style="left:392px;top:238.6px;width:94px;height:1px;background:#777"></div>
<div class="a" style="left:406.3px;top:225px;width:1px;height:14px;background:#777"></div>
<div class="a" style="left:421.4px;top:225px;width:1px;height:14px;background:#777"></div>
<div class="a" style="left:453px;top:225px;width:1px;height:14px;background:#777"></div>
<div class="a" style="left:485.2px;top:225px;width:1px;height:14px;background:#777"></div>
<svg class="a" style="left:393px;top:226px" width="90" height="12" viewBox="0 0 90 12"><circle cx="4" cy="6" r="1.8" fill="#666"/><path d="M6 6h3M9.5 5v2" stroke="#666" stroke-width="0.8"/><circle cx="19" cy="6" r="1.8" fill="#666"/><path d="M21 6h4" stroke="#666" stroke-width="0.8"/><circle cx="38" cy="6.5" r="1.9" fill="#666"/><circle cx="54" cy="6.5" r="1.9" fill="#666"/><path d="M38 6.5h16" stroke="#777" stroke-width="0.8"/><circle cx="69" cy="7.5" r="1.9" fill="#666"/><circle cx="78.5" cy="3.8" r="1.9" fill="#666"/><circle cx="87" cy="7.8" r="1.9" fill="#666"/><path d="M69 7.5L78.5 3.8L87 7.8" stroke="#888" stroke-width="0.8" fill="none"/></svg>
<div class="a" style="left:335.4px;top:244.5px;width:55.1px;height:11.5px;background:#e1e1e1;border:1px solid #cfcfcf"></div>
<div class="t" id="t70" style="left:340.5px;top:246.54px;font-size:8.1px;color:#1a1a1a;font-weight:normal;transform:scaleX(0.9317);">Übernehmen</div>
<div class="a" style="left:392px;top:244.5px;width:56.7px;height:11.5px;background:#e1e1e1;border:1px solid #cfcfcf"></div>
<div class="t" id="t71" style="left:402px;top:246.54px;font-size:8.1px;color:#1a1a1a;font-weight:normal;transform:scaleX(0.9194);">Abbrechen</div>
<div class="a" style="left:509.5px;top:142.5px;width:3px;height:117px;background:#3c3c3c"></div>
<div class="a" style="left:330px;top:258.5px;width:182px;height:1.5px;background:#3c3c3c"></div>
<div class="a" style="left:427px;top:311.5px;width:329.6px;height:82.6px;background:#f0f0f0;box-shadow:0 0 0 1px rgba(60,60,60,0.5),2px 2px 4px rgba(0,0,0,0.3)"></div>
<div class="a" style="left:427px;top:311.5px;width:329.6px;height:54.5px;background:#fff"></div>
<div class="t" id="t72" style="left:432.2px;top:317.37px;font-size:8.3px;color:#1a1a1a;font-weight:normal;transform:scaleX(0.8686);">BeckerCAD 8786.229 - Warnung.</div>
<svg class="a" style="left:430px;top:342.4px" width="19" height="17.5" viewBox="0 0 19 17.5"><defs><linearGradient id="wy" x1="0" y1="0" x2="0" y2="1"><stop offset="0" stop-color="#fff6a0"/><stop offset="1" stop-color="#e0b020"/></linearGradient></defs><path d="M9.5 0.5L18.5 17H0.5z" fill="url(#wy)" stroke="#b8a060" stroke-width="0.8"/><rect x="8.6" y="5" width="1.8" height="7" fill="#111"/><rect x="8.6" y="13" width="1.8" height="1.8" fill="#111"/></svg>
<div class="t" id="t73" style="left:461.7px;top:344.67px;font-size:8.3px;color:#1a1a1a;font-weight:normal;transform:scaleX(0.9064);">Konstruktion unmöglich. Es kommt zur Selbstschneidung des Körpers.</div>
<div class="a" style="left:683.2px;top:373.3px;width:66.8px;height:12.9px;background:#e1e1e1;border:1px solid #adadad"></div>
<div class="t" id="t74" style="left:711.5px;top:375.77px;font-size:8.3px;color:#1a1a1a;font-weight:normal;transform:scaleX(0.8750);">OK</div>
<div class="a" style="left:891px;top:103.7px;width:120.5px;height:163.4px;background:#efefef;box-shadow:0 0 0 1px rgba(70,70,70,0.35)"></div>
<div class="a" style="left:891px;top:103.7px;width:120.5px;height:19.9px;background:#fff"></div>
<div class="t" id="t75" style="left:896.9px;top:109.94px;font-size:8.1px;color:#a0a0a0;font-weight:normal;transform:scaleX(0.8801);">Status</div>
<div class="a" style="left:998.5px;top:108.6px;width:11.5px;height:12.3px;background:#e0e0e0"></div>
<div class="a" style="left:952.2px;top:123.6px;width:1.2px;height:143.5px;background:#333"></div>
<div class="a" style="left:959px;top:123.6px;width:51.7px;height:12.85px;background:#fff;border:1px solid #9a9a9a"></div>
<div class="a" style="left:959px;top:136.45px;width:51.7px;height:12.85px;background:#fff;border:1px solid #9a9a9a"></div>
<div class="a" style="left:959px;top:149.29999999999998px;width:51.7px;height:12.85px;background:#fff;border:1px solid #9a9a9a"></div>
<div class="a" style="left:959px;top:162.14999999999998px;width:51.7px;height:12.85px;background:#fff;border:1px solid #9a9a9a"></div>
<div class="a" style="left:959px;top:175.0px;width:51.7px;height:12.85px;background:#fff;border:1px solid #9a9a9a"></div>
<div class="a" style="left:959px;top:187.85px;width:51.7px;height:12.85px;background:#fff;border:1px solid #9a9a9a"></div>
<div class="a" style="left:959px;top:200.7px;width:51.7px;height:12.85px;background:#fff;border:1px solid #9a9a9a"></div>
<div class="a" style="left:959px;top:213.55px;width:51.7px;height:12.85px;background:#fff;border:1px solid #9a9a9a"></div>
<div class="a" style="left:959px;top:226.39999999999998px;width:51.7px;height:12.85px;background:#fff;border:1px solid #9a9a9a"></div>
<div class="a" style="left:959px;top:239.25px;width:51.7px;height:12.85px;background:#fff;border:1px solid #9a9a9a"></div>
<div class="a" style="left:0px;top:645px;width:1174px;height:16px;background:#f0f0f0"></div>
<div class="a" style="left:0px;top:645px;width:101px;height:12.6px;border-top:1px solid #b0b0b0;border-bottom:1px solid #fff"></div>
<div class="a" style="left:104.2px;top:645px;width:857px;height:12.6px;border-top:1px solid #b0b0b0;border-left:1px solid #a8a8a8;border-right:1px solid #fff;border-bottom:1px solid #fff"></div>
<div class="t" id="t76" style="left:-3px;top:648.34px;font-size:8.1px;color:#1a1a1a;font-weight:normal;transform:scaleX(0.9580);">angskörper</div>
<div class="t" id="t77" style="left:105.6px;top:648.34px;font-size:8.1px;color:#1a1a1a;font-weight:normal;transform:scaleX(0.9123);">Die Generierung läuft ...</div>
<svg class="a" style="left:1155px;top:644px" width="22" height="17" viewBox="0 0 22 17"><ellipse cx="12" cy="9" rx="11" ry="7.5" fill="#d81030"/><text x="9" y="12" font-size="8" font-weight="bold" font-family="Liberation Sans" fill="#fff">D</text></svg>
</body></html>
